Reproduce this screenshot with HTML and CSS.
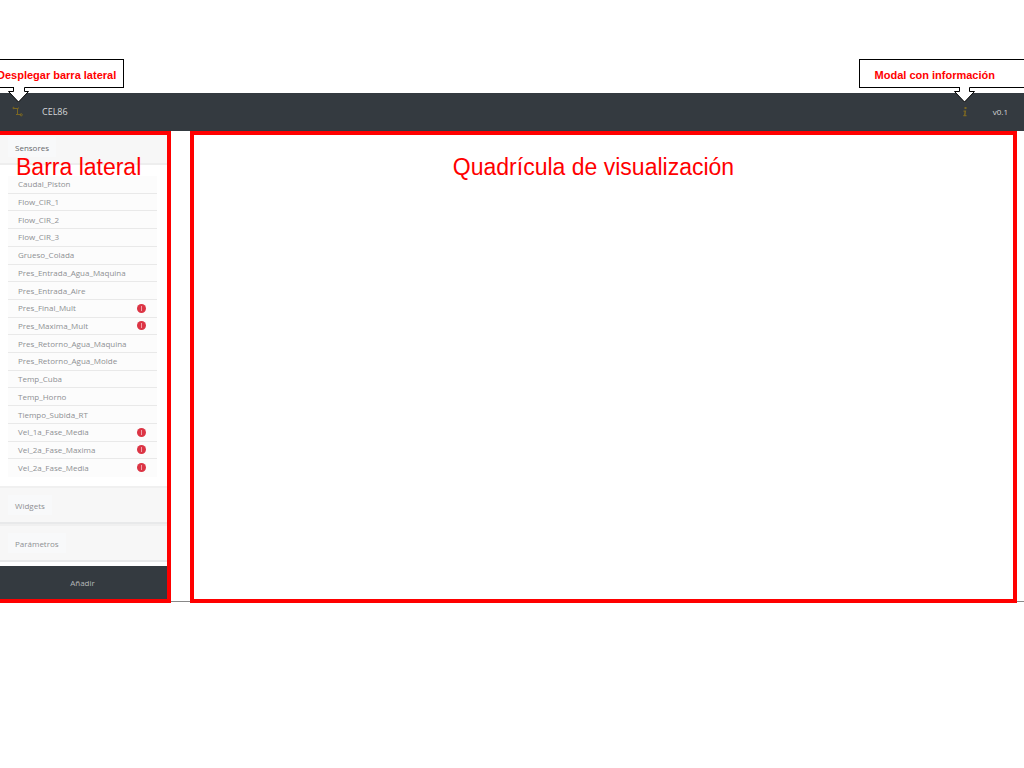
FILE: index.html
```html
<!DOCTYPE html>
<html lang="es">
<head>
<meta charset="utf-8">
<meta name="viewport" content="width=device-width, initial-scale=1">
<title>CEL86</title>
<link rel="stylesheet" href="styles.css">
</head>
<body>
<div class="app">
  <header class="topbar">
    <button class="icon-button" type="button" aria-label="Desplegar barra lateral">
      <svg width="12" height="12" viewBox="0 0 12 12" fill="none" stroke="#7b6722">
        <path d="M1 2.500H6.500M5.500 2.500V8.500M4 8.500H9"/><circle cx="1.500" cy="2" r=".7"/><circle cx="9.200" cy="8.800" r="1.100"/><path d="M5.500 2.500l1-1"/>
      </svg>
    </button>
    <span class="brand">CEL86</span>
    <button class="icon-button info" type="button" aria-label="Información">
      <svg width="8" height="12" viewBox="0 0 8 12" fill="#7b6722">
        <path d="M3.500 1h2v2h-2zM2.500 4.500h2.700L4.500 9h1v1.200H2.300V9h.7l.5-3.300h-1z"/>
      </svg>
    </button>
    <span class="version">v0.1</span>
  </header>
  <main class="workspace">
    <aside class="sidebar">
      <section>
        <h2 class="section-head"><button class="section-button open" type="button">Sensores</button></h2>
        <ul class="sensors">
          <li>Caudal_Piston</li>
          <li>Flow_CIR_1</li>
          <li>Flow_CIR_2</li>
          <li>Flow_CIR_3</li>
          <li>Grueso_Colada</li>
          <li>Pres_Entrada_Agua_Maquina</li>
          <li>Pres_Entrada_Aire</li>
          <li>Pres_Final_Mult<i class="alert"></i></li>
          <li>Pres_Maxima_Mult<i class="alert"></i></li>
          <li>Pres_Retorno_Agua_Maquina</li>
          <li>Pres_Retorno_Agua_Molde</li>
          <li>Temp_Cuba</li>
          <li>Temp_Horno</li>
          <li>Tiempo_Subida_RT</li>
          <li>Vel_1a_Fase_Media<i class="alert"></i></li>
          <li>Vel_2a_Fase_Maxima<i class="alert"></i></li>
          <li>Vel_2a_Fase_Media<i class="alert"></i></li>
        </ul>
      </section>
      <h2 class="section-head closed"><button class="section-button" type="button">Widgets</button></h2>
      <h2 class="section-head closed"><button class="section-button" type="button">Parámetros</button></h2>
      <button class="add" type="button">Añadir</button>
      <p class="label sidebar-label">Barra lateral</p>
    </aside>
    <section class="canvas">
      <p class="label">Quadrícula de visualización</p>
    </section>
  </main>
  <div class="callout callout-left">Desplegar barra lateral
    <svg class="pointer" width="24" height="18" viewBox="0 0 24 18"><path d="M7 0V5.500H1.500L11.500 16L21.500 5.500H18V0" fill="#fff"/><path d="M0 1.500H6.500V5.500H1.500L11.500 16L21.500 5.500H17.500V1.500H24" fill="none" stroke="#000"/></svg>
  </div>
  <div class="callout callout-right">Modal con información
    <svg class="pointer" width="24" height="18" viewBox="0 0 24 18"><path d="M7 0V5.500H1.500L11.500 16L21.500 5.500H17V0" fill="#fff"/><path d="M0 1.500H6.500V5.500H1.500L11.500 16L21.500 5.500H16.500V1.500H24" fill="none" stroke="#000"/></svg>
  </div>
</div>
</body>
</html>
```
FILE: styles.css
```css
* { box-sizing: border-box; }
body {
  margin: 0;
  background: #fff;
  font-family: "Open Sans", "Noto Sans", sans-serif;
  font-size: 8px;
  line-height: 12px;
  color: #8e9093;
}
button { font: inherit; color: inherit; border: 0; padding: 0; background: none; }
h2, p, ul { margin: 0; padding: 0; font-weight: normal; font-size: inherit; }
.app { position: relative; padding-top: 93px; overflow: hidden; }
.topbar {
  display: flex;
  align-items: center;
  height: 38px;
  padding: 0 16px 0 12px;
  background: #343a40;
  color: #d5d7d9;
}
.icon-button, .icon-button svg { display: block; }
.brand { margin-left: 18px; font-size: 9px; }
.info { margin-left: auto; margin-right: 24px; }
.workspace {
  display: grid;
  grid-template-columns: 171px 1fr;
  column-gap: 19px;
  padding-right: 7px;
  background: linear-gradient(#888, #888) 0 470px / 100% 1px no-repeat;
}
.sidebar {
  position: relative;
  display: flex;
  flex-direction: column;
  border: 4px solid #f00;
  border-left: 0;
  background: #fff;
}
.section-head {
  display: flex;
  align-items: center;
  height: 30px;
  padding-left: 8px;
  background: #f7f7f7;
  border-bottom: 2px solid #eee;
}
.section-button { padding: 5px 7px 3px; background: #f8f9fa; }
.section-button.open { color: #66696c; margin-bottom: 4px; }
.section-head.closed { height: 38px; border-top: 2px solid #f0f0f0; border-bottom-color: #e8e9ea; }
.sensors {
  display: grid;
  grid-auto-rows: 1fr;
  height: 301px;
  margin: 11px 10px 9px 8px;
  list-style: none;
}
.sensors li {
  display: flex;
  align-items: center;
  justify-content: space-between;
  padding: 0 11px 0 10px;
  background: #fcfcfc;
  border-bottom: 1px solid #e9e9e9;
}
.sensors li:last-child { border-bottom-color: transparent; }
.alert {
  width: 9px;
  height: 9px;
  border-radius: 50%;
  background: linear-gradient(#f0a0a9, #f0a0a9) center / 1px 5px no-repeat #dc3545;
}
.add { height: 33px; margin-top: 4px; padding-right: 2px; background: #343a40; color: #b4b7ba; }
.label {
  font: 23px/28px "Liberation Sans", Arial, sans-serif;
  color: #f00;
  white-space: nowrap;
}
.sidebar-label { position: absolute; top: 18px; left: 16px; }
.canvas { border: 4px solid #f00; background: #fff; padding: 18px 20px 0 0; text-align: center; }
.callout {
  position: absolute;
  top: 59px;
  height: 29px;
  border: 1px solid #000;
  background: #fff;
  color: #f00;
  font: bold 11px/30px "Liberation Sans", Arial, sans-serif;
  white-space: nowrap;
}
.callout-left { left: -12px; padding: 0 7px 0 8px; }
.callout-right { right: -12px; padding: 0 40px 0 15px; }
.pointer { position: absolute; top: 26px; left: 18px; }
.callout-right .pointer { left: 93px; }
```
